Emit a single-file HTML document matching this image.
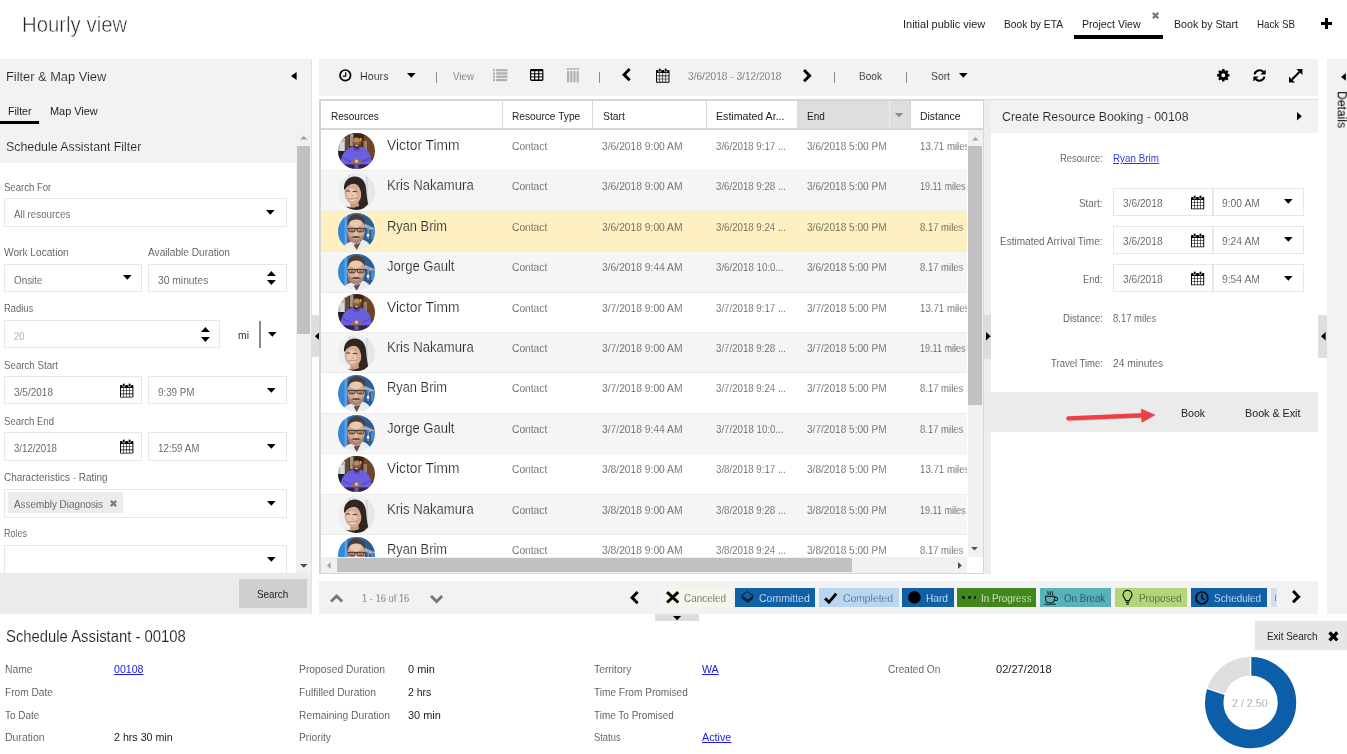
<!DOCTYPE html>
<html lang="en"><head><meta charset="utf-8"><title>Hourly view - Schedule Assistant</title>
<style>
html,body{margin:0;padding:0;background:#fff}
body{width:1347px;height:754px;position:relative;overflow:hidden;font-family:"Liberation Sans", sans-serif;-webkit-font-smoothing:antialiased}
body div,body span,body svg,body a{position:absolute;box-sizing:content-box}
.t{white-space:nowrap;display:block;transform-origin:0 0}
svg{overflow:visible;display:block}
</style></head><body>
<span id="t1" class="t" style="left:22.3px;top:14.25px;font-size:22px;line-height:22px;color:#222;transform:scaleX(0.9249);-webkit-text-stroke:0.55px #fff;">Hourly view</span>
<span id="t2" class="t" style="left:902.5px;top:18.63px;font-size:11px;line-height:11px;color:#222;transform:scaleX(0.9956);">Initial public view</span>
<span id="t3" class="t" style="left:1004px;top:18.63px;font-size:11px;line-height:11px;color:#222;transform:scaleX(0.9302);">Book by ETA</span>
<span id="t4" class="t" style="left:1082px;top:18.63px;font-size:11px;line-height:11px;color:#222;transform:scaleX(0.9624);">Project View</span>
<span id="t5" class="t" style="left:1174px;top:18.63px;font-size:11px;line-height:11px;color:#222;transform:scaleX(0.9687);">Book by Start</span>
<span id="t6" class="t" style="left:1257px;top:18.63px;font-size:11px;line-height:11px;color:#222;transform:scaleX(0.8880);">Hack SB</span>
<div style="left:1074px;top:35px;width:89px;height:3.5px;background:#000;"></div>
<svg style="left:1152px;top:12.4px;" width="7.2" height="7.2" viewBox="0 0 7.2 7.2"><path d="M0.88 0.88 L6.32 6.32 M6.32 0.88 L0.88 6.32" stroke="#777" stroke-width="2.2" stroke-linecap="butt"/></svg>
<div style="left:1320.5px;top:21.6px;width:11px;height:3px;background:#000;"></div>
<div style="left:1324.5px;top:17.6px;width:3px;height:11px;background:#000;"></div>
<div style="left:0px;top:59px;width:311.3px;height:554.5px;background:#f2f2f2;"></div>
<div style="left:311.3px;top:59px;width:0.7px;height:554.5px;background:#e2e2e2;"></div>
<span id="t7" class="t" style="left:5.5px;top:69.91px;font-size:13.5px;line-height:13.5px;color:#222;transform:scaleX(0.9495);-webkit-text-stroke:0.12px #f2f2f2;">Filter &amp; Map View</span>
<svg style="left:291.2px;top:71.8px;" width="5.6" height="8" viewBox="0 0 5.6 8"><path d="M5.6 0 V8 L0 4 Z" fill="#000"/></svg>
<span id="t8" class="t" style="left:7.5px;top:105.63px;font-size:11px;line-height:11px;color:#222;transform:scaleX(0.9620);">Filter</span>
<span id="t9" class="t" style="left:50px;top:105.63px;font-size:11px;line-height:11px;color:#222;transform:scaleX(0.9920);">Map View</span>
<div style="left:0px;top:120.8px;width:38.6px;height:3.6px;background:#000;"></div>
<div style="left:0px;top:162.5px;width:296.4px;height:410.5px;background:#fff;"></div>
<div style="left:296.4px;top:130px;width:14.9px;height:443px;background:#f1f1f1;"></div>
<span id="t10" class="t" style="left:5.5px;top:140.41px;font-size:13.5px;line-height:13.5px;color:#222;transform:scaleX(0.9149);-webkit-text-stroke:0.12px #f2f2f2;">Schedule Assistant Filter</span>
<svg style="left:299.5px;top:136.2px;" width="7.6" height="3.6" viewBox="0 0 7.6 3.6"><path d="M0 3.6 H7.6 L3.8 0 Z" fill="#a3a3a3"/></svg>
<div style="left:297.2px;top:146px;width:12.8px;height:187.7px;background:#c1c1c1;"></div>
<svg style="left:299.5px;top:563.8px;" width="7.6" height="3.8" viewBox="0 0 7.6 3.8"><path d="M0 0H7.6 L3.8 3.8 Z" fill="#505050"/></svg>
<span id="t11" class="t" style="left:4px;top:182.13px;font-size:11px;line-height:11px;color:#2a2a2a;transform:scaleX(0.8685);-webkit-text-stroke:0.22px #fff;">Search For</span>
<span id="t12" class="t" style="left:4px;top:246.63px;font-size:11px;line-height:11px;color:#2a2a2a;transform:scaleX(0.9234);-webkit-text-stroke:0.22px #fff;">Work Location</span>
<span id="t13" class="t" style="left:148px;top:246.63px;font-size:11px;line-height:11px;color:#2a2a2a;transform:scaleX(0.9203);-webkit-text-stroke:0.22px #fff;">Available Duration</span>
<span id="t14" class="t" style="left:4px;top:302.63px;font-size:11px;line-height:11px;color:#2a2a2a;transform:scaleX(0.8520);-webkit-text-stroke:0.22px #fff;">Radius</span>
<span id="t15" class="t" style="left:4px;top:359.63px;font-size:11px;line-height:11px;color:#2a2a2a;transform:scaleX(0.8829);-webkit-text-stroke:0.22px #fff;">Search Start</span>
<span id="t16" class="t" style="left:4px;top:415.63px;font-size:11px;line-height:11px;color:#2a2a2a;transform:scaleX(0.8699);-webkit-text-stroke:0.22px #fff;">Search End</span>
<span id="t17" class="t" style="left:4px;top:471.63px;font-size:11px;line-height:11px;color:#2a2a2a;transform:scaleX(0.9055);-webkit-text-stroke:0.22px #fff;">Characteristics - Rating</span>
<span id="t18" class="t" style="left:4px;top:527.63px;font-size:11px;line-height:11px;color:#2a2a2a;transform:scaleX(0.8183);-webkit-text-stroke:0.22px #fff;">Roles</span>
<div style="left:4px;top:198px;width:280.5px;height:26.5px;background:#fff;border:1px solid #e7e7e7;"></div>
<span id="t19" class="t" style="left:14px;top:209.03px;font-size:11px;line-height:11px;color:#303030;transform:scaleX(0.8887);-webkit-text-stroke:0.22px #fff;">All resources</span>
<svg style="left:266.3px;top:210.1px;" width="8.6" height="4.8" viewBox="0 0 8.6 4.8"><path d="M0 0H8.6 L4.3 4.8 Z" fill="#000"/></svg>
<div style="left:4px;top:264px;width:136.3px;height:26.3px;background:#fff;border:1px solid #e7e7e7;"></div>
<span id="t20" class="t" style="left:14px;top:274.53px;font-size:11px;line-height:11px;color:#303030;transform:scaleX(0.8964);-webkit-text-stroke:0.22px #fff;">Onsite</span>
<svg style="left:122.6px;top:275.4px;" width="8.6" height="4.8" viewBox="0 0 8.6 4.8"><path d="M0 0H8.6 L4.3 4.8 Z" fill="#000"/></svg>
<div style="left:148px;top:264px;width:136.5px;height:26.3px;background:#fff;border:1px solid #e7e7e7;"></div>
<span id="t21" class="t" style="left:157.7px;top:274.53px;font-size:11px;line-height:11px;color:#303030;transform:scaleX(0.9351);-webkit-text-stroke:0.22px #fff;">30 minutes</span>
<svg style="left:266.8px;top:271.15px;" width="8.8" height="4.9" viewBox="0 0 8.8 4.9"><path d="M0 4.9 H8.8 L4.4 0 Z" fill="#000"/></svg>
<svg style="left:266.8px;top:280.45px;" width="8.8" height="4.9" viewBox="0 0 8.8 4.9"><path d="M0 0H8.8 L4.4 4.9 Z" fill="#000"/></svg>
<div style="left:4px;top:320.2px;width:214.2px;height:26.1px;background:#fff;border:1px solid #e7e7e7;"></div>
<span id="t22" class="t" style="left:14px;top:330.53px;font-size:11px;line-height:11px;color:#777;transform:scaleX(0.8426);-webkit-text-stroke:0.3px #fff;">20</span>
<svg style="left:200.6px;top:327.35px;" width="8.8" height="4.9" viewBox="0 0 8.8 4.9"><path d="M0 4.9 H8.8 L4.4 0 Z" fill="#000"/></svg>
<svg style="left:200.6px;top:336.65px;" width="8.8" height="4.9" viewBox="0 0 8.8 4.9"><path d="M0 0H8.8 L4.4 4.9 Z" fill="#000"/></svg>
<span id="t23" class="t" style="left:238px;top:330.23px;font-size:11px;line-height:11px;color:#333;transform:scaleX(0.9477);">mi</span>
<div style="left:259.2px;top:321px;width:1.6px;height:26.6px;background:#8a8a8a;"></div>
<svg style="left:268.4px;top:332.1px;" width="8.6" height="4.8" viewBox="0 0 8.6 4.8"><path d="M0 0H8.6 L4.3 4.8 Z" fill="#000"/></svg>
<div style="left:4px;top:376.2px;width:136.3px;height:26.3px;background:#fff;border:1px solid #e7e7e7;"></div>
<span id="t24" class="t" style="left:14px;top:387.03px;font-size:11px;line-height:11px;color:#303030;transform:scaleX(0.9101);-webkit-text-stroke:0.22px #fff;">3/5/2018</span>
<svg style="left:120.4px;top:383px;" width="13.4" height="14.8" viewBox="0 0 14 15"><path fill="#000" fill-rule="evenodd" d="M1 1.800h12a1 1 0 0 1 1 1V14a1 1 0 0 1-1 1H1a1 1 0 0 1-1-1V2.800a1 1 0 0 1 1-1zM1 5h2.55v2.6h-2.55zM4.15 5h2.55v2.6h-2.55zM7.3 5h2.55v2.6h-2.55zM10.45 5h2.55v2.6h-2.55zM1 8.25h2.55v2.6h-2.55zM4.15 8.25h2.55v2.6h-2.55zM7.3 8.25h2.55v2.6h-2.55zM10.45 8.25h2.55v2.6h-2.55zM1 11.5h2.55v2.6h-2.55zM4.15 11.5h2.55v2.6h-2.55zM7.3 11.5h2.55v2.6h-2.55zM10.45 11.5h2.55v2.6h-2.55z"/><rect x="2.700" y="0" width="2.500" height="3.900" rx="1.200" fill="#000" stroke="#fff" stroke-width="0.700"/><rect x="8.800" y="0" width="2.500" height="3.900" rx="1.200" fill="#000" stroke="#fff" stroke-width="0.700"/></svg>
<div style="left:148px;top:376.2px;width:136.5px;height:26.3px;background:#fff;border:1px solid #e7e7e7;"></div>
<span id="t25" class="t" style="left:157.7px;top:387.03px;font-size:11px;line-height:11px;color:#303030;transform:scaleX(0.8907);-webkit-text-stroke:0.22px #fff;">9:39 PM</span>
<svg style="left:267px;top:388.3px;" width="8.6" height="4.8" viewBox="0 0 8.6 4.8"><path d="M0 0H8.6 L4.3 4.8 Z" fill="#000"/></svg>
<div style="left:4px;top:432.4px;width:136.3px;height:26.4px;background:#fff;border:1px solid #e7e7e7;"></div>
<span id="t26" class="t" style="left:14px;top:443.23px;font-size:11px;line-height:11px;color:#303030;transform:scaleX(0.8784);-webkit-text-stroke:0.22px #fff;">3/12/2018</span>
<svg style="left:120.4px;top:439.2px;" width="13.4" height="14.8" viewBox="0 0 14 15"><path fill="#000" fill-rule="evenodd" d="M1 1.800h12a1 1 0 0 1 1 1V14a1 1 0 0 1-1 1H1a1 1 0 0 1-1-1V2.800a1 1 0 0 1 1-1zM1 5h2.55v2.6h-2.55zM4.15 5h2.55v2.6h-2.55zM7.3 5h2.55v2.6h-2.55zM10.45 5h2.55v2.6h-2.55zM1 8.25h2.55v2.6h-2.55zM4.15 8.25h2.55v2.6h-2.55zM7.3 8.25h2.55v2.6h-2.55zM10.45 8.25h2.55v2.6h-2.55zM1 11.5h2.55v2.6h-2.55zM4.15 11.5h2.55v2.6h-2.55zM7.3 11.5h2.55v2.6h-2.55zM10.45 11.5h2.55v2.6h-2.55z"/><rect x="2.700" y="0" width="2.500" height="3.900" rx="1.200" fill="#000" stroke="#fff" stroke-width="0.700"/><rect x="8.800" y="0" width="2.500" height="3.900" rx="1.200" fill="#000" stroke="#fff" stroke-width="0.700"/></svg>
<div style="left:148px;top:432.4px;width:136.5px;height:26.4px;background:#fff;border:1px solid #e7e7e7;"></div>
<span id="t27" class="t" style="left:157.7px;top:443.23px;font-size:11px;line-height:11px;color:#303030;transform:scaleX(0.8928);-webkit-text-stroke:0.22px #fff;">12:59 AM</span>
<svg style="left:267px;top:444.4px;" width="8.6" height="4.8" viewBox="0 0 8.6 4.8"><path d="M0 0H8.6 L4.3 4.8 Z" fill="#000"/></svg>
<div style="left:4px;top:488.8px;width:280.5px;height:26.8px;background:#fff;border:1px solid #e7e7e7;"></div>
<div style="left:8px;top:492px;width:115px;height:21.4px;background:#ececec;"></div>
<span id="t28" class="t" style="left:14px;top:498.83px;font-size:11px;line-height:11px;color:#262626;transform:scaleX(0.8984);-webkit-text-stroke:0.25px #ececec;">Assembly Diagnosis</span>
<svg style="left:109.7px;top:500.1px;" width="7" height="7" viewBox="0 0 7 7"><path d="M0.88 0.88 L6.12 6.12 M6.12 0.88 L0.88 6.12" stroke="#7a7a7a" stroke-width="2.2" stroke-linecap="butt"/></svg>
<svg style="left:267px;top:500.8px;" width="8.6" height="4.8" viewBox="0 0 8.6 4.8"><path d="M0 0H8.6 L4.3 4.8 Z" fill="#000"/></svg>
<div style="left:4px;top:545px;width:280.5px;height:28px;background:#fff;border:1px solid #e7e7e7;"></div>
<svg style="left:267px;top:556.9px;" width="8.6" height="4.8" viewBox="0 0 8.6 4.8"><path d="M0 0H8.6 L4.3 4.8 Z" fill="#000"/></svg>
<div style="left:0px;top:573px;width:311.3px;height:40.5px;background:#ebebeb;"></div>
<div style="left:238.8px;top:579px;width:68px;height:29px;background:#d0cece;"></div>
<span id="t29" class="t" style="left:256.75px;top:588.93px;font-size:11px;line-height:11px;color:#222;transform:scaleX(0.8961);">Search</span>
<div style="left:312px;top:315.3px;width:7.4px;height:42.2px;background:#dedede;"></div>
<svg style="left:314.6px;top:332px;" width="4.6" height="8.4" viewBox="0 0 4.6 8.4"><path d="M4.6 0 V8.4 L0 4.2 Z" fill="#000"/></svg>
<div style="left:319.4px;top:59px;width:998.3px;height:36.8px;background:#f2f2f2;"></div>
<svg style="left:338.6px;top:69px;" width="12.6" height="12.6" viewBox="0 0 12.6 12.6"><circle cx="6.300" cy="6.300" r="5.300" fill="none" stroke="#000" stroke-width="1.700"/><path d="M6.700 3.200V7.100H3.800" fill="none" stroke="#000" stroke-width="1.200"/></svg>
<span id="t30" class="t" style="left:359.5px;top:70.83px;font-size:11px;line-height:11px;color:#222;transform:scaleX(0.9704);-webkit-text-stroke:0.12px #f2f2f2;">Hours</span>
<svg style="left:406.7px;top:73.3px;" width="8.6" height="4.8" viewBox="0 0 8.6 4.8"><path d="M0 0H8.6 L4.3 4.8 Z" fill="#000"/></svg>
<div style="left:436.1px;top:72px;width:1px;height:10.8px;background:#8c8c8c;"></div>
<div style="left:598.9px;top:72px;width:1px;height:10.8px;background:#8c8c8c;"></div>
<div style="left:833.5px;top:72px;width:1px;height:10.8px;background:#8c8c8c;"></div>
<div style="left:905.5px;top:72px;width:1px;height:10.8px;background:#8c8c8c;"></div>
<span id="t31" class="t" style="left:453px;top:70.83px;font-size:11px;line-height:11px;color:#4a4a4a;transform:scaleX(0.8875);-webkit-text-stroke:0.25px #f2f2f2;">View</span>
<svg style="left:492.6px;top:69px;" width="14.4" height="12.3" viewBox="0 0 14.4 12.3"><rect x="0" y="0" width="2" height="2.3" fill="#b0b0b0"/><rect x="3.2" y="0" width="11.2" height="2.3" fill="#b0b0b0"/><rect x="0" y="3.3" width="2" height="2.3" fill="#b0b0b0"/><rect x="3.2" y="3.3" width="11.2" height="2.3" fill="#b0b0b0"/><rect x="0" y="6.6" width="2" height="2.3" fill="#b0b0b0"/><rect x="3.2" y="6.6" width="11.2" height="2.3" fill="#b0b0b0"/><rect x="0" y="9.9" width="2" height="2.3" fill="#b0b0b0"/><rect x="3.2" y="9.9" width="11.2" height="2.3" fill="#b0b0b0"/></svg>
<svg style="left:529.6px;top:69.1px;" width="13.4" height="12" viewBox="0 0 13.4 12"><rect x="0" y="0" width="13.4" height="12" rx="1.4" fill="#000"/><rect x="1.2" y="2.2" width="2.9" height="2.1" fill="#fff"/><rect x="5.25" y="2.2" width="2.9" height="2.1" fill="#fff"/><rect x="9.3" y="2.2" width="2.9" height="2.1" fill="#fff"/><rect x="1.2" y="5.3" width="2.9" height="2.1" fill="#fff"/><rect x="5.25" y="5.3" width="2.9" height="2.1" fill="#fff"/><rect x="9.3" y="5.3" width="2.9" height="2.1" fill="#fff"/><rect x="1.2" y="8.4" width="2.9" height="2.1" fill="#fff"/><rect x="5.25" y="8.4" width="2.9" height="2.1" fill="#fff"/><rect x="9.3" y="8.4" width="2.9" height="2.1" fill="#fff"/></svg>
<svg style="left:567.2px;top:68.4px;" width="11.8" height="14.4" viewBox="0 0 11.8 14.4"><rect x="0" y="0" width="2.2" height="2" fill="#b0b0b0"/><rect x="0" y="3.1" width="2.2" height="11.3" fill="#b0b0b0"/><rect x="3.2" y="0" width="2.2" height="2" fill="#b0b0b0"/><rect x="3.2" y="3.1" width="2.2" height="11.3" fill="#b0b0b0"/><rect x="6.4" y="0" width="2.2" height="2" fill="#b0b0b0"/><rect x="6.4" y="3.1" width="2.2" height="11.3" fill="#b0b0b0"/><rect x="9.6" y="0" width="2.2" height="2" fill="#b0b0b0"/><rect x="9.6" y="3.1" width="2.2" height="11.3" fill="#b0b0b0"/></svg>
<svg style="left:622.25px;top:68.45px;" width="8.7" height="13.3" viewBox="0 0 8.7 13.3"><path d="M7.67 1.03 L2.05 6.65 L7.67 12.27" fill="none" stroke="#000" stroke-width="2.9" stroke-linejoin="miter"/></svg>
<svg style="left:655.8px;top:68.1px;" width="13.5" height="14.9" viewBox="0 0 14 15"><path fill="#000" fill-rule="evenodd" d="M1 1.800h12a1 1 0 0 1 1 1V14a1 1 0 0 1-1 1H1a1 1 0 0 1-1-1V2.800a1 1 0 0 1 1-1zM1 5h2.55v2.6h-2.55zM4.15 5h2.55v2.6h-2.55zM7.3 5h2.55v2.6h-2.55zM10.45 5h2.55v2.6h-2.55zM1 8.25h2.55v2.6h-2.55zM4.15 8.25h2.55v2.6h-2.55zM7.3 8.25h2.55v2.6h-2.55zM10.45 8.25h2.55v2.6h-2.55zM1 11.5h2.55v2.6h-2.55zM4.15 11.5h2.55v2.6h-2.55zM7.3 11.5h2.55v2.6h-2.55zM10.45 11.5h2.55v2.6h-2.55z"/><rect x="2.700" y="0" width="2.500" height="3.900" rx="1.200" fill="#000" stroke="#fff" stroke-width="0.700"/><rect x="8.800" y="0" width="2.500" height="3.900" rx="1.200" fill="#000" stroke="#fff" stroke-width="0.700"/></svg>
<span id="t32" class="t" style="left:687.8px;top:70.93px;font-size:11px;line-height:11px;color:#3a3a3a;transform:scaleX(0.9209);-webkit-text-stroke:0.28px #f2f2f2;">3/6/2018 - 3/12/2018</span>
<svg style="left:802.75px;top:68.55px;" width="8.7" height="13.3" viewBox="0 0 8.7 13.3"><path d="M1.03 1.03 L6.65 6.65 L1.03 12.27" fill="none" stroke="#000" stroke-width="2.9" stroke-linejoin="miter"/></svg>
<span id="t33" class="t" style="left:859px;top:70.83px;font-size:11px;line-height:11px;color:#222;transform:scaleX(0.9149);-webkit-text-stroke:0.12px #f2f2f2;">Book</span>
<span id="t34" class="t" style="left:931px;top:70.83px;font-size:11px;line-height:11px;color:#222;transform:scaleX(0.9407);-webkit-text-stroke:0.12px #f2f2f2;">Sort</span>
<svg style="left:959.2px;top:73.3px;" width="8.6" height="4.8" viewBox="0 0 8.6 4.8"><path d="M0 0H8.6 L4.3 4.8 Z" fill="#000"/></svg>
<svg style="left:1216.8px;top:69.2px;" width="12.6" height="12.6" viewBox="0 0 12.6 12.6"><path fill="#000" fill-rule="evenodd" d="M5.01 1.57 L5.17 0.1 L7.43 0.1 L7.59 1.57 L8.73 2.04 L9.88 1.12 L11.48 2.72 L10.56 3.87 L11.03 5.01 L12.5 5.17 L12.5 7.43 L11.03 7.59 L10.56 8.73 L11.48 9.88 L9.88 11.48 L8.73 10.56 L7.59 11.03 L7.43 12.5 L5.17 12.5 L5.01 11.03 L3.87 10.56 L2.72 11.48 L1.12 9.88 L2.04 8.73 L1.57 7.59 L0.1 7.43 L0.1 5.17 L1.57 5.01 L2.04 3.87 L1.12 2.72 L2.72 1.12 L3.87 2.04ZM4.3 6.3 a2 2 0 1 0 4 0 a2 2 0 1 0 -4 0Z"/></svg>
<svg style="left:1253px;top:69px;" width="13" height="13" viewBox="0 0 13 13"><path d="M1.6 5.4A5.1 5.1 0 0 1 10.4 3" fill="none" stroke="#000" stroke-width="2.200"/><path d="M12.6 0.4V5.6H7.4Z" fill="#000"/><path d="M11.4 7.6A5.1 5.1 0 0 1 2.6 10" fill="none" stroke="#000" stroke-width="2.200"/><path d="M0.4 12.6V7.4H5.6Z" fill="#000"/></svg>
<svg style="left:1289px;top:68.7px;" width="13.4" height="13.4" viewBox="0 0 13.4 13.4"><path d="M3 10.400L10.400 3" stroke="#000" stroke-width="2.100"/><path d="M13.400 0V6L7.400 0Z" fill="#000"/><path d="M0 13.400V7.400L6 13.400Z" fill="#000"/></svg>
<div style="left:319.4px;top:99.3px;width:665px;height:474.7px;background:#d6d6d6;"></div>
<div style="left:321.2px;top:101px;width:661.8px;height:471.7px;background:#fff;"></div>
<div style="left:797.5px;top:101.2px;width:112.5px;height:26.8px;background:#dedede;"></div>
<div style="left:502px;top:101.2px;width:1px;height:26.8px;background:#d9d9d9;"></div>
<div style="left:592px;top:101.2px;width:1px;height:26.8px;background:#d9d9d9;"></div>
<div style="left:706px;top:101.2px;width:1px;height:26.8px;background:#d9d9d9;"></div>
<div style="left:797px;top:101.2px;width:1px;height:26.8px;background:#d9d9d9;"></div>
<div style="left:909.5px;top:101.2px;width:1px;height:26.8px;background:#d9d9d9;"></div>
<div style="left:888.6px;top:101.2px;width:0.8px;height:26.8px;background:#ececec;"></div>
<div style="left:321.2px;top:128px;width:661.8px;height:2px;background:#d6d6d6;"></div>
<span id="t35" class="t" style="left:330.5px;top:110.63px;font-size:11px;line-height:11px;color:#222;transform:scaleX(0.9091);">Resources</span>
<span id="t36" class="t" style="left:511.75px;top:110.63px;font-size:11px;line-height:11px;color:#222;transform:scaleX(0.9245);">Resource Type</span>
<span id="t37" class="t" style="left:602.5px;top:110.63px;font-size:11px;line-height:11px;color:#222;transform:scaleX(0.9391);">Start</span>
<span id="t38" class="t" style="left:716px;top:110.63px;font-size:11px;line-height:11px;color:#222;transform:scaleX(0.9662);">Estimated Ar...</span>
<span id="t39" class="t" style="left:806.8px;top:110.63px;font-size:11px;line-height:11px;color:#222;transform:scaleX(0.9089);">End</span>
<span id="t40" class="t" style="left:920px;top:110.63px;font-size:11px;line-height:11px;color:#222;transform:scaleX(0.9488);">Distance</span>
<svg style="left:895.4px;top:113.1px;" width="8" height="4.2" viewBox="0 0 8 4.2"><path d="M0 0H8 L4 4.2 Z" fill="#8a8a8a"/></svg>
<div style="left:321.2px;top:130px;width:646px;height:428px;overflow:hidden">
<div style="left:0px;top:0px;width:646px;height:40.4px;background:#fff;border-top:1px solid transparent;"></div>
<svg style="left:17.2px;top:2.6px;border-radius:50%;overflow:hidden" width="36.6" height="36.6" viewBox="0 0 36.6 36.6"><filter id="bf0" x="-10%" y="-10%" width="120%" height="120%"><feGaussianBlur stdDeviation="0.45"/></filter><g filter="url(#bf0)"><rect width="37" height="37" fill="#4a2f1f"/><rect x="-1" y="5" width="8" height="15" fill="#aebcb8"/><rect x="2" y="9" width="4" height="9" fill="#d4dcd8"/><rect x="12" y="1" width="3.500" height="12" fill="#9a9a86"/><rect x="7" y="0" width="4" height="16" fill="#6a4a34"/><rect x="16" y="0" width="9" height="6" fill="#3a2418"/><rect x="21.500" y="5" width="2" height="3.500" fill="#d8b020"/><rect x="26" y="3" width="11" height="22" fill="#6e4428"/><rect x="25.500" y="8" width="3.500" height="9" fill="#a07a68"/><rect x="-1" y="18" width="8" height="12" fill="#241a2a"/><ellipse cx="18.600" cy="9.600" rx="4.200" ry="5.600" fill="#8c5a40"/><ellipse cx="18.600" cy="7.200" rx="3" ry="2.200" fill="#b88866"/><path d="M15.300 10.500c.8 3.600 5.800 3.600 6.600 0 .1 3.800-1.400 5.200-3.300 5.200s-3.400-1.400-3.300-5.200z" fill="#4a2c20"/><path d="M17.200 12.300h2.800v.9h-2.800z" fill="#e8dcd4"/><path d="M2.500 32C2.800 22 6 16.500 14.500 13.600l4.100 2.800 4.100-2.800C31 16.500 33.600 22 34 32z" fill="#6b5ee0"/><path d="M14.500 13.600l4.100 2.800-1.800 2.600zM22.700 13.600l-4.100 2.800 1.800 2.600z" fill="#5448c4"/><path d="M5 24c2 3 6 4 9 4.600M32 24c-2 3-6 4-9 4.600" stroke="#5246c0" stroke-width="1.200" fill="none"/><ellipse cx="18.500" cy="28.800" rx="5.600" ry="2.300" fill="#9a6a50"/><ellipse cx="18.500" cy="28.200" rx="1.600" ry="1.600" fill="#d8c0c8"/><rect x="-1" y="31.400" width="39" height="6" fill="#34204c"/><rect x="16.500" y="31.400" width="4" height="5" fill="#6a58a8"/></g></svg>
<span id="t41" class="t" style="left:66.3px;top:7.07px;font-size:15px;line-height:15px;color:#262626;transform:scaleX(0.9188);-webkit-text-stroke:0.2px #fff;">Victor Timm</span>
<span id="t42" class="t" style="left:190.55px;top:10.93px;font-size:11px;line-height:11px;color:#333;transform:scaleX(0.9299);-webkit-text-stroke:0.25px #fff;">Contact</span>
<span id="t43" class="t" style="left:281.3px;top:10.93px;font-size:11px;line-height:11px;color:#333;transform:scaleX(0.9334);-webkit-text-stroke:0.25px #fff;">3/6/2018 9:00 AM</span>
<span id="t44" class="t" style="left:394.8px;top:10.93px;font-size:11px;line-height:11px;color:#333;transform:scaleX(0.8801);-webkit-text-stroke:0.25px #fff;">3/6/2018 9:17 ...</span>
<span id="t45" class="t" style="left:485.6px;top:10.93px;font-size:11px;line-height:11px;color:#333;transform:scaleX(0.9166);-webkit-text-stroke:0.25px #fff;">3/6/2018 5:00 PM</span>
<span id="t46" class="t" style="left:598.8px;top:10.93px;font-size:11px;line-height:11px;color:#333;transform:scaleX(0.8796);-webkit-text-stroke:0.25px #fff;">13.71 miles</span>
<div style="left:0px;top:40.4px;width:646px;height:40.4px;background:#f5f5f5;border-top:1px solid #ececec;"></div>
<svg style="left:17.2px;top:43px;border-radius:50%;overflow:hidden" width="36.6" height="36.6" viewBox="0 0 36.6 36.6"><filter id="bf1" x="-10%" y="-10%" width="120%" height="120%"><feGaussianBlur stdDeviation="0.55"/></filter><g filter="url(#bf1)"><rect width="37" height="37" fill="#eceff0"/><rect x="10.500" y="0" width="2" height="9" fill="#d6dade"/><rect x="14.500" y="0" width="1.200" height="6" fill="#dfe3e6"/><rect x="27.600" y="3" width="2.600" height="30" fill="#d5dbe2"/><rect x="30.200" y="3" width="7" height="30" fill="#e4e8ec"/><path d="M6 16C5.500 8.500 10.500 3.400 16.800 3.500c6.800.1 10.600 4.800 11.200 11.500.5 6 1.200 11.500 2.200 16l-5.200 5-7-4 1-13z" fill="#2e2624"/><path d="M12.500 28l8 1 .8 5.500h-9.300z" fill="#c79a82"/><path d="M8.500 33.400c3 1.500 9.500 1.600 13.500-1l3.500 5H7.500z" fill="#262224"/><ellipse cx="14.900" cy="20.600" rx="8.300" ry="10.600" fill="#d8ac92" transform="rotate(-8 14.900 20.600)"/><ellipse cx="13.800" cy="21.600" rx="5.200" ry="6.600" fill="#e8c6b0" transform="rotate(-8 13.800 21.600)"/><path d="M5.800 17.500C6.500 10 12 6 17.500 7.500c3.500 1 6 4 6.800 8.500-3-3.600-5.400-5.400-8.800-5.200-3.800.2-7 2.800-9.700 6.700z" fill="#2e2624"/><path d="M22.800 12c1.700 5.500 1.700 13 .4 20.500l5.300-2c-1-6-1.600-12-2.600-16z" fill="#2e2624"/><path d="M8 18.400c1.200-.7 2.800-.7 4 0M14.800 18.800c1.300-.7 3-.6 4.300.2" stroke="#4a3630" stroke-width="1.100" fill="none"/><path d="M10.200 25.600c2.300 1.400 5.800 1.300 8.400-.5-1 3.400-6.800 4-8.400.5z" fill="#f4e8e6"/><path d="M9.900 25.400c2.600 1.100 6 .9 9-.7" stroke="#b46c6c" stroke-width=".9" fill="none"/><path d="M13.500 22.500c.6.500 1.400.5 2 0" stroke="#b88c74" stroke-width=".8" fill="none"/></g></svg>
<span id="t47" class="t" style="left:66.3px;top:47.47px;font-size:15px;line-height:15px;color:#262626;transform:scaleX(0.8747);-webkit-text-stroke:0.2px #f5f5f5;">Kris Nakamura</span>
<span id="t48" class="t" style="left:190.55px;top:51.33px;font-size:11px;line-height:11px;color:#333;transform:scaleX(0.9299);-webkit-text-stroke:0.25px #f5f5f5;">Contact</span>
<span id="t49" class="t" style="left:281.3px;top:51.33px;font-size:11px;line-height:11px;color:#333;transform:scaleX(0.9334);-webkit-text-stroke:0.25px #f5f5f5;">3/6/2018 9:00 AM</span>
<span id="t50" class="t" style="left:394.8px;top:51.33px;font-size:11px;line-height:11px;color:#333;transform:scaleX(0.8801);-webkit-text-stroke:0.25px #f5f5f5;">3/6/2018 9:28 ...</span>
<span id="t51" class="t" style="left:485.6px;top:51.33px;font-size:11px;line-height:11px;color:#333;transform:scaleX(0.9166);-webkit-text-stroke:0.25px #f5f5f5;">3/6/2018 5:00 PM</span>
<span id="t52" class="t" style="left:598.8px;top:51.33px;font-size:11px;line-height:11px;color:#333;transform:scaleX(0.8207);-webkit-text-stroke:0.25px #f5f5f5;">19.11 miles</span>
<div style="left:0px;top:80.8px;width:646px;height:40.4px;background:#fef0c1;border-top:1px solid #ececec;"></div>
<svg style="left:17.2px;top:83.4px;border-radius:50%;overflow:hidden" width="36.6" height="36.6" viewBox="0 0 36.6 36.6"><filter id="bf2" x="-10%" y="-10%" width="120%" height="120%"><feGaussianBlur stdDeviation="0.55"/></filter><g filter="url(#bf2)"><rect width="37" height="37" fill="#2f6fb8"/><rect x="-1" y="0" width="10.500" height="37" fill="#3587d8"/><rect x="6.500" y="3" width="2.500" height="30" fill="#5aa2e6"/><rect x="25" y="0" width="12" height="37" fill="#2c5c98"/><path d="M24 9.500l13 6v3.600l-13-6z" fill="#aab2ba"/><rect x="29.500" y="14" width="1.600" height="12" fill="#8095ad"/><rect x="33" y="16" width="4" height="10" fill="#4a86c8"/><ellipse cx="30" cy="22.200" rx="1.300" ry="1.700" fill="#eef0f2"/><rect x="9.500" y="25" width="3" height="5" fill="#9a4450"/><path d="M4.500 37c1-5.500 5.500-7.800 10-8.800l4 3 5.500-4.600c5 1 8.500 4.400 9.500 10.400z" fill="#e8ebf0"/><path d="M15.500 31.500l3.200 5.500 4-7.500-3.600 1.600z" fill="#6e4e3e"/><ellipse cx="18.200" cy="17" rx="8.700" ry="11.700" fill="#d6aa90"/><ellipse cx="17.600" cy="10.400" rx="6" ry="3.800" fill="#e8cab4"/><ellipse cx="17.900" cy="20.400" rx="2.200" ry="2.600" fill="#e2bca4"/><path d="M9.600 13C8.800 5.800 13 1.300 18.400 1.300S28 5.300 26.800 13c-.9-4.400-4-6.400-8.400-6.400S10.600 8.600 9.600 13z" fill="#4e3e34"/><path d="M10 20.500c1.200 2.800 4.400 4 8.100 4s7-1.200 8.200-4c0 6.200-3.700 10-8.200 10S10 26.700 10 20.500z" fill="#ab8874"/><path d="M13.800 24.200c1.300-1.700 7.300-1.700 8.600 0-1.300 1.300-7.300 1.300-8.600 0z" fill="#6e4c40"/><path d="M15 25.300c1.800.9 4.400.9 6.200 0" stroke="#e6d4cc" stroke-width=".7" fill="none"/><path d="M9.600 15.200h17.400v1H9.600z" fill="#2a2220"/><rect x="10.800" y="15.300" width="6.400" height="3.500" rx="1.300" fill="#c49c86" stroke="#2a2220" stroke-width="0.850"/><rect x="19.400" y="15.300" width="6.400" height="3.500" rx="1.300" fill="#c49c86" stroke="#2a2220" stroke-width="0.850"/><path d="M12.800 17.200h2.400M21.400 17.200h2.400" stroke="#4a3a34" stroke-width="0.800"/></g></svg>
<span id="t53" class="t" style="left:66.3px;top:87.87px;font-size:15px;line-height:15px;color:#262626;transform:scaleX(0.8565);-webkit-text-stroke:0.2px #fef0c1;">Ryan Brim</span>
<span id="t54" class="t" style="left:190.55px;top:91.73px;font-size:11px;line-height:11px;color:#333;transform:scaleX(0.9299);-webkit-text-stroke:0.25px #fef0c1;">Contact</span>
<span id="t55" class="t" style="left:281.3px;top:91.73px;font-size:11px;line-height:11px;color:#333;transform:scaleX(0.9334);-webkit-text-stroke:0.25px #fef0c1;">3/6/2018 9:00 AM</span>
<span id="t56" class="t" style="left:394.8px;top:91.73px;font-size:11px;line-height:11px;color:#333;transform:scaleX(0.8801);-webkit-text-stroke:0.25px #fef0c1;">3/6/2018 9:24 ...</span>
<span id="t57" class="t" style="left:485.6px;top:91.73px;font-size:11px;line-height:11px;color:#333;transform:scaleX(0.9166);-webkit-text-stroke:0.25px #fef0c1;">3/6/2018 5:00 PM</span>
<span id="t58" class="t" style="left:598.8px;top:91.73px;font-size:11px;line-height:11px;color:#333;transform:scaleX(0.8631);-webkit-text-stroke:0.25px #fef0c1;">8.17 miles</span>
<div style="left:0px;top:121.2px;width:646px;height:40.4px;background:#f5f5f5;border-top:1px solid #ececec;"></div>
<svg style="left:17.2px;top:123.8px;border-radius:50%;overflow:hidden" width="36.6" height="36.6" viewBox="0 0 36.6 36.6"><filter id="bf3" x="-10%" y="-10%" width="120%" height="120%"><feGaussianBlur stdDeviation="0.55"/></filter><g filter="url(#bf3)"><rect width="37" height="37" fill="#2f6fb8"/><rect x="-1" y="0" width="10.500" height="37" fill="#3587d8"/><rect x="6.500" y="3" width="2.500" height="30" fill="#5aa2e6"/><rect x="25" y="0" width="12" height="37" fill="#2c5c98"/><path d="M24 9.500l13 6v3.600l-13-6z" fill="#aab2ba"/><rect x="29.500" y="14" width="1.600" height="12" fill="#8095ad"/><rect x="33" y="16" width="4" height="10" fill="#4a86c8"/><ellipse cx="30" cy="22.200" rx="1.300" ry="1.700" fill="#eef0f2"/><rect x="9.500" y="25" width="3" height="5" fill="#9a4450"/><path d="M4.500 37c1-5.500 5.500-7.800 10-8.800l4 3 5.500-4.600c5 1 8.500 4.400 9.500 10.400z" fill="#e8ebf0"/><path d="M15.500 31.500l3.200 5.500 4-7.500-3.600 1.600z" fill="#6e4e3e"/><ellipse cx="18.200" cy="17" rx="8.700" ry="11.700" fill="#d6aa90"/><ellipse cx="17.600" cy="10.400" rx="6" ry="3.800" fill="#e8cab4"/><ellipse cx="17.900" cy="20.400" rx="2.200" ry="2.600" fill="#e2bca4"/><path d="M9.600 13C8.800 5.800 13 1.300 18.400 1.300S28 5.300 26.800 13c-.9-4.400-4-6.400-8.400-6.400S10.600 8.600 9.600 13z" fill="#4e3e34"/><path d="M10 20.500c1.200 2.800 4.400 4 8.100 4s7-1.200 8.200-4c0 6.200-3.700 10-8.200 10S10 26.700 10 20.500z" fill="#ab8874"/><path d="M13.800 24.200c1.300-1.700 7.300-1.700 8.600 0-1.300 1.300-7.300 1.300-8.600 0z" fill="#6e4c40"/><path d="M15 25.300c1.800.9 4.400.9 6.200 0" stroke="#e6d4cc" stroke-width=".7" fill="none"/><path d="M9.600 15.200h17.400v1H9.600z" fill="#2a2220"/><rect x="10.800" y="15.300" width="6.400" height="3.500" rx="1.300" fill="#c49c86" stroke="#2a2220" stroke-width="0.850"/><rect x="19.400" y="15.300" width="6.400" height="3.500" rx="1.300" fill="#c49c86" stroke="#2a2220" stroke-width="0.850"/><path d="M12.800 17.200h2.400M21.400 17.200h2.400" stroke="#4a3a34" stroke-width="0.800"/></g></svg>
<span id="t59" class="t" style="left:66.3px;top:128.27px;font-size:15px;line-height:15px;color:#262626;transform:scaleX(0.8704);-webkit-text-stroke:0.2px #f5f5f5;">Jorge Gault</span>
<span id="t60" class="t" style="left:190.55px;top:132.13px;font-size:11px;line-height:11px;color:#333;transform:scaleX(0.9299);-webkit-text-stroke:0.25px #f5f5f5;">Contact</span>
<span id="t61" class="t" style="left:281.3px;top:132.13px;font-size:11px;line-height:11px;color:#333;transform:scaleX(0.9334);-webkit-text-stroke:0.25px #f5f5f5;">3/6/2018 9:44 AM</span>
<span id="t62" class="t" style="left:394.8px;top:132.13px;font-size:11px;line-height:11px;color:#333;transform:scaleX(0.8829);-webkit-text-stroke:0.25px #f5f5f5;">3/6/2018 10:0...</span>
<span id="t63" class="t" style="left:485.6px;top:132.13px;font-size:11px;line-height:11px;color:#333;transform:scaleX(0.9166);-webkit-text-stroke:0.25px #f5f5f5;">3/6/2018 5:00 PM</span>
<span id="t64" class="t" style="left:598.8px;top:132.13px;font-size:11px;line-height:11px;color:#333;transform:scaleX(0.8631);-webkit-text-stroke:0.25px #f5f5f5;">8.17 miles</span>
<div style="left:0px;top:161.6px;width:646px;height:40.4px;background:#fff;border-top:1px solid #ececec;"></div>
<svg style="left:17.2px;top:164.2px;border-radius:50%;overflow:hidden" width="36.6" height="36.6" viewBox="0 0 36.6 36.6"><filter id="bf4" x="-10%" y="-10%" width="120%" height="120%"><feGaussianBlur stdDeviation="0.45"/></filter><g filter="url(#bf4)"><rect width="37" height="37" fill="#4a2f1f"/><rect x="-1" y="5" width="8" height="15" fill="#aebcb8"/><rect x="2" y="9" width="4" height="9" fill="#d4dcd8"/><rect x="12" y="1" width="3.500" height="12" fill="#9a9a86"/><rect x="7" y="0" width="4" height="16" fill="#6a4a34"/><rect x="16" y="0" width="9" height="6" fill="#3a2418"/><rect x="21.500" y="5" width="2" height="3.500" fill="#d8b020"/><rect x="26" y="3" width="11" height="22" fill="#6e4428"/><rect x="25.500" y="8" width="3.500" height="9" fill="#a07a68"/><rect x="-1" y="18" width="8" height="12" fill="#241a2a"/><ellipse cx="18.600" cy="9.600" rx="4.200" ry="5.600" fill="#8c5a40"/><ellipse cx="18.600" cy="7.200" rx="3" ry="2.200" fill="#b88866"/><path d="M15.300 10.500c.8 3.600 5.800 3.600 6.600 0 .1 3.800-1.400 5.200-3.300 5.200s-3.400-1.400-3.300-5.200z" fill="#4a2c20"/><path d="M17.200 12.300h2.800v.9h-2.800z" fill="#e8dcd4"/><path d="M2.500 32C2.800 22 6 16.500 14.500 13.600l4.100 2.800 4.100-2.800C31 16.500 33.600 22 34 32z" fill="#6b5ee0"/><path d="M14.500 13.600l4.100 2.800-1.800 2.600zM22.700 13.600l-4.100 2.800 1.800 2.600z" fill="#5448c4"/><path d="M5 24c2 3 6 4 9 4.600M32 24c-2 3-6 4-9 4.600" stroke="#5246c0" stroke-width="1.200" fill="none"/><ellipse cx="18.500" cy="28.800" rx="5.600" ry="2.300" fill="#9a6a50"/><ellipse cx="18.500" cy="28.200" rx="1.600" ry="1.600" fill="#d8c0c8"/><rect x="-1" y="31.400" width="39" height="6" fill="#34204c"/><rect x="16.500" y="31.400" width="4" height="5" fill="#6a58a8"/></g></svg>
<span id="t65" class="t" style="left:66.3px;top:168.67px;font-size:15px;line-height:15px;color:#262626;transform:scaleX(0.9188);-webkit-text-stroke:0.2px #fff;">Victor Timm</span>
<span id="t66" class="t" style="left:190.55px;top:172.53px;font-size:11px;line-height:11px;color:#333;transform:scaleX(0.9299);-webkit-text-stroke:0.25px #fff;">Contact</span>
<span id="t67" class="t" style="left:281.3px;top:172.53px;font-size:11px;line-height:11px;color:#333;transform:scaleX(0.9334);-webkit-text-stroke:0.25px #fff;">3/7/2018 9:00 AM</span>
<span id="t68" class="t" style="left:394.8px;top:172.53px;font-size:11px;line-height:11px;color:#333;transform:scaleX(0.8801);-webkit-text-stroke:0.25px #fff;">3/7/2018 9:17 ...</span>
<span id="t69" class="t" style="left:485.6px;top:172.53px;font-size:11px;line-height:11px;color:#333;transform:scaleX(0.9166);-webkit-text-stroke:0.25px #fff;">3/7/2018 5:00 PM</span>
<span id="t70" class="t" style="left:598.8px;top:172.53px;font-size:11px;line-height:11px;color:#333;transform:scaleX(0.8796);-webkit-text-stroke:0.25px #fff;">13.71 miles</span>
<div style="left:0px;top:202px;width:646px;height:40.4px;background:#f5f5f5;border-top:1px solid #ececec;"></div>
<svg style="left:17.2px;top:204.6px;border-radius:50%;overflow:hidden" width="36.6" height="36.6" viewBox="0 0 36.6 36.6"><filter id="bf5" x="-10%" y="-10%" width="120%" height="120%"><feGaussianBlur stdDeviation="0.55"/></filter><g filter="url(#bf5)"><rect width="37" height="37" fill="#eceff0"/><rect x="10.500" y="0" width="2" height="9" fill="#d6dade"/><rect x="14.500" y="0" width="1.200" height="6" fill="#dfe3e6"/><rect x="27.600" y="3" width="2.600" height="30" fill="#d5dbe2"/><rect x="30.200" y="3" width="7" height="30" fill="#e4e8ec"/><path d="M6 16C5.500 8.500 10.500 3.400 16.800 3.500c6.800.1 10.600 4.800 11.200 11.500.5 6 1.200 11.500 2.200 16l-5.200 5-7-4 1-13z" fill="#2e2624"/><path d="M12.500 28l8 1 .8 5.500h-9.300z" fill="#c79a82"/><path d="M8.500 33.400c3 1.500 9.500 1.600 13.500-1l3.500 5H7.500z" fill="#262224"/><ellipse cx="14.900" cy="20.600" rx="8.300" ry="10.600" fill="#d8ac92" transform="rotate(-8 14.900 20.600)"/><ellipse cx="13.800" cy="21.600" rx="5.200" ry="6.600" fill="#e8c6b0" transform="rotate(-8 13.800 21.600)"/><path d="M5.800 17.500C6.500 10 12 6 17.500 7.500c3.500 1 6 4 6.800 8.500-3-3.600-5.400-5.400-8.800-5.200-3.800.2-7 2.800-9.700 6.700z" fill="#2e2624"/><path d="M22.800 12c1.700 5.500 1.700 13 .4 20.500l5.300-2c-1-6-1.600-12-2.600-16z" fill="#2e2624"/><path d="M8 18.400c1.200-.7 2.800-.7 4 0M14.800 18.800c1.300-.7 3-.6 4.300.2" stroke="#4a3630" stroke-width="1.100" fill="none"/><path d="M10.200 25.600c2.300 1.400 5.800 1.300 8.400-.5-1 3.400-6.800 4-8.400.5z" fill="#f4e8e6"/><path d="M9.900 25.400c2.600 1.100 6 .9 9-.7" stroke="#b46c6c" stroke-width=".9" fill="none"/><path d="M13.500 22.500c.6.500 1.400.5 2 0" stroke="#b88c74" stroke-width=".8" fill="none"/></g></svg>
<span id="t71" class="t" style="left:66.3px;top:209.07px;font-size:15px;line-height:15px;color:#262626;transform:scaleX(0.8747);-webkit-text-stroke:0.2px #f5f5f5;">Kris Nakamura</span>
<span id="t72" class="t" style="left:190.55px;top:212.93px;font-size:11px;line-height:11px;color:#333;transform:scaleX(0.9299);-webkit-text-stroke:0.25px #f5f5f5;">Contact</span>
<span id="t73" class="t" style="left:281.3px;top:212.93px;font-size:11px;line-height:11px;color:#333;transform:scaleX(0.9334);-webkit-text-stroke:0.25px #f5f5f5;">3/7/2018 9:00 AM</span>
<span id="t74" class="t" style="left:394.8px;top:212.93px;font-size:11px;line-height:11px;color:#333;transform:scaleX(0.8801);-webkit-text-stroke:0.25px #f5f5f5;">3/7/2018 9:28 ...</span>
<span id="t75" class="t" style="left:485.6px;top:212.93px;font-size:11px;line-height:11px;color:#333;transform:scaleX(0.9166);-webkit-text-stroke:0.25px #f5f5f5;">3/7/2018 5:00 PM</span>
<span id="t76" class="t" style="left:598.8px;top:212.93px;font-size:11px;line-height:11px;color:#333;transform:scaleX(0.8207);-webkit-text-stroke:0.25px #f5f5f5;">19.11 miles</span>
<div style="left:0px;top:242.4px;width:646px;height:40.4px;background:#fff;border-top:1px solid #ececec;"></div>
<svg style="left:17.2px;top:245px;border-radius:50%;overflow:hidden" width="36.6" height="36.6" viewBox="0 0 36.6 36.6"><filter id="bf6" x="-10%" y="-10%" width="120%" height="120%"><feGaussianBlur stdDeviation="0.55"/></filter><g filter="url(#bf6)"><rect width="37" height="37" fill="#2f6fb8"/><rect x="-1" y="0" width="10.500" height="37" fill="#3587d8"/><rect x="6.500" y="3" width="2.500" height="30" fill="#5aa2e6"/><rect x="25" y="0" width="12" height="37" fill="#2c5c98"/><path d="M24 9.500l13 6v3.600l-13-6z" fill="#aab2ba"/><rect x="29.500" y="14" width="1.600" height="12" fill="#8095ad"/><rect x="33" y="16" width="4" height="10" fill="#4a86c8"/><ellipse cx="30" cy="22.200" rx="1.300" ry="1.700" fill="#eef0f2"/><rect x="9.500" y="25" width="3" height="5" fill="#9a4450"/><path d="M4.500 37c1-5.500 5.500-7.800 10-8.800l4 3 5.500-4.600c5 1 8.500 4.400 9.500 10.400z" fill="#e8ebf0"/><path d="M15.500 31.500l3.200 5.500 4-7.500-3.600 1.600z" fill="#6e4e3e"/><ellipse cx="18.200" cy="17" rx="8.700" ry="11.700" fill="#d6aa90"/><ellipse cx="17.600" cy="10.400" rx="6" ry="3.800" fill="#e8cab4"/><ellipse cx="17.900" cy="20.400" rx="2.200" ry="2.600" fill="#e2bca4"/><path d="M9.600 13C8.800 5.800 13 1.300 18.400 1.300S28 5.300 26.800 13c-.9-4.400-4-6.400-8.400-6.400S10.600 8.600 9.600 13z" fill="#4e3e34"/><path d="M10 20.500c1.200 2.800 4.400 4 8.100 4s7-1.200 8.200-4c0 6.200-3.700 10-8.200 10S10 26.700 10 20.500z" fill="#ab8874"/><path d="M13.800 24.200c1.300-1.700 7.300-1.700 8.600 0-1.300 1.300-7.300 1.300-8.600 0z" fill="#6e4c40"/><path d="M15 25.300c1.800.9 4.400.9 6.200 0" stroke="#e6d4cc" stroke-width=".7" fill="none"/><path d="M9.600 15.200h17.400v1H9.600z" fill="#2a2220"/><rect x="10.800" y="15.300" width="6.400" height="3.500" rx="1.300" fill="#c49c86" stroke="#2a2220" stroke-width="0.850"/><rect x="19.400" y="15.300" width="6.400" height="3.500" rx="1.300" fill="#c49c86" stroke="#2a2220" stroke-width="0.850"/><path d="M12.800 17.200h2.400M21.400 17.200h2.400" stroke="#4a3a34" stroke-width="0.800"/></g></svg>
<span id="t77" class="t" style="left:66.3px;top:249.47px;font-size:15px;line-height:15px;color:#262626;transform:scaleX(0.8565);-webkit-text-stroke:0.2px #fff;">Ryan Brim</span>
<span id="t78" class="t" style="left:190.55px;top:253.33px;font-size:11px;line-height:11px;color:#333;transform:scaleX(0.9299);-webkit-text-stroke:0.25px #fff;">Contact</span>
<span id="t79" class="t" style="left:281.3px;top:253.33px;font-size:11px;line-height:11px;color:#333;transform:scaleX(0.9334);-webkit-text-stroke:0.25px #fff;">3/7/2018 9:00 AM</span>
<span id="t80" class="t" style="left:394.8px;top:253.33px;font-size:11px;line-height:11px;color:#333;transform:scaleX(0.8801);-webkit-text-stroke:0.25px #fff;">3/7/2018 9:24 ...</span>
<span id="t81" class="t" style="left:485.6px;top:253.33px;font-size:11px;line-height:11px;color:#333;transform:scaleX(0.9166);-webkit-text-stroke:0.25px #fff;">3/7/2018 5:00 PM</span>
<span id="t82" class="t" style="left:598.8px;top:253.33px;font-size:11px;line-height:11px;color:#333;transform:scaleX(0.8631);-webkit-text-stroke:0.25px #fff;">8.17 miles</span>
<div style="left:0px;top:282.8px;width:646px;height:40.4px;background:#f5f5f5;border-top:1px solid #ececec;"></div>
<svg style="left:17.2px;top:285.4px;border-radius:50%;overflow:hidden" width="36.6" height="36.6" viewBox="0 0 36.6 36.6"><filter id="bf7" x="-10%" y="-10%" width="120%" height="120%"><feGaussianBlur stdDeviation="0.55"/></filter><g filter="url(#bf7)"><rect width="37" height="37" fill="#2f6fb8"/><rect x="-1" y="0" width="10.500" height="37" fill="#3587d8"/><rect x="6.500" y="3" width="2.500" height="30" fill="#5aa2e6"/><rect x="25" y="0" width="12" height="37" fill="#2c5c98"/><path d="M24 9.500l13 6v3.600l-13-6z" fill="#aab2ba"/><rect x="29.500" y="14" width="1.600" height="12" fill="#8095ad"/><rect x="33" y="16" width="4" height="10" fill="#4a86c8"/><ellipse cx="30" cy="22.200" rx="1.300" ry="1.700" fill="#eef0f2"/><rect x="9.500" y="25" width="3" height="5" fill="#9a4450"/><path d="M4.500 37c1-5.500 5.500-7.800 10-8.800l4 3 5.500-4.600c5 1 8.500 4.400 9.500 10.400z" fill="#e8ebf0"/><path d="M15.500 31.500l3.200 5.500 4-7.500-3.600 1.600z" fill="#6e4e3e"/><ellipse cx="18.200" cy="17" rx="8.700" ry="11.700" fill="#d6aa90"/><ellipse cx="17.600" cy="10.400" rx="6" ry="3.800" fill="#e8cab4"/><ellipse cx="17.900" cy="20.400" rx="2.200" ry="2.600" fill="#e2bca4"/><path d="M9.600 13C8.800 5.800 13 1.300 18.400 1.300S28 5.300 26.800 13c-.9-4.400-4-6.400-8.400-6.400S10.600 8.600 9.600 13z" fill="#4e3e34"/><path d="M10 20.500c1.200 2.800 4.400 4 8.100 4s7-1.200 8.200-4c0 6.200-3.700 10-8.200 10S10 26.700 10 20.500z" fill="#ab8874"/><path d="M13.800 24.200c1.300-1.700 7.300-1.700 8.600 0-1.300 1.300-7.300 1.300-8.600 0z" fill="#6e4c40"/><path d="M15 25.300c1.800.9 4.400.9 6.200 0" stroke="#e6d4cc" stroke-width=".7" fill="none"/><path d="M9.600 15.200h17.400v1H9.600z" fill="#2a2220"/><rect x="10.800" y="15.300" width="6.400" height="3.500" rx="1.300" fill="#c49c86" stroke="#2a2220" stroke-width="0.850"/><rect x="19.400" y="15.300" width="6.400" height="3.500" rx="1.300" fill="#c49c86" stroke="#2a2220" stroke-width="0.850"/><path d="M12.800 17.200h2.400M21.400 17.200h2.400" stroke="#4a3a34" stroke-width="0.800"/></g></svg>
<span id="t83" class="t" style="left:66.3px;top:289.87px;font-size:15px;line-height:15px;color:#262626;transform:scaleX(0.8704);-webkit-text-stroke:0.2px #f5f5f5;">Jorge Gault</span>
<span id="t84" class="t" style="left:190.55px;top:293.73px;font-size:11px;line-height:11px;color:#333;transform:scaleX(0.9299);-webkit-text-stroke:0.25px #f5f5f5;">Contact</span>
<span id="t85" class="t" style="left:281.3px;top:293.73px;font-size:11px;line-height:11px;color:#333;transform:scaleX(0.9334);-webkit-text-stroke:0.25px #f5f5f5;">3/7/2018 9:44 AM</span>
<span id="t86" class="t" style="left:394.8px;top:293.73px;font-size:11px;line-height:11px;color:#333;transform:scaleX(0.8829);-webkit-text-stroke:0.25px #f5f5f5;">3/7/2018 10:0...</span>
<span id="t87" class="t" style="left:485.6px;top:293.73px;font-size:11px;line-height:11px;color:#333;transform:scaleX(0.9166);-webkit-text-stroke:0.25px #f5f5f5;">3/7/2018 5:00 PM</span>
<span id="t88" class="t" style="left:598.8px;top:293.73px;font-size:11px;line-height:11px;color:#333;transform:scaleX(0.8631);-webkit-text-stroke:0.25px #f5f5f5;">8.17 miles</span>
<div style="left:0px;top:323.2px;width:646px;height:40.4px;background:#fff;border-top:1px solid #ececec;"></div>
<svg style="left:17.2px;top:325.8px;border-radius:50%;overflow:hidden" width="36.6" height="36.6" viewBox="0 0 36.6 36.6"><filter id="bf8" x="-10%" y="-10%" width="120%" height="120%"><feGaussianBlur stdDeviation="0.45"/></filter><g filter="url(#bf8)"><rect width="37" height="37" fill="#4a2f1f"/><rect x="-1" y="5" width="8" height="15" fill="#aebcb8"/><rect x="2" y="9" width="4" height="9" fill="#d4dcd8"/><rect x="12" y="1" width="3.500" height="12" fill="#9a9a86"/><rect x="7" y="0" width="4" height="16" fill="#6a4a34"/><rect x="16" y="0" width="9" height="6" fill="#3a2418"/><rect x="21.500" y="5" width="2" height="3.500" fill="#d8b020"/><rect x="26" y="3" width="11" height="22" fill="#6e4428"/><rect x="25.500" y="8" width="3.500" height="9" fill="#a07a68"/><rect x="-1" y="18" width="8" height="12" fill="#241a2a"/><ellipse cx="18.600" cy="9.600" rx="4.200" ry="5.600" fill="#8c5a40"/><ellipse cx="18.600" cy="7.200" rx="3" ry="2.200" fill="#b88866"/><path d="M15.300 10.500c.8 3.600 5.800 3.600 6.600 0 .1 3.800-1.400 5.200-3.300 5.200s-3.400-1.400-3.300-5.200z" fill="#4a2c20"/><path d="M17.200 12.300h2.800v.9h-2.800z" fill="#e8dcd4"/><path d="M2.500 32C2.800 22 6 16.500 14.500 13.600l4.100 2.800 4.100-2.800C31 16.500 33.600 22 34 32z" fill="#6b5ee0"/><path d="M14.500 13.600l4.100 2.800-1.800 2.600zM22.700 13.600l-4.100 2.800 1.800 2.600z" fill="#5448c4"/><path d="M5 24c2 3 6 4 9 4.600M32 24c-2 3-6 4-9 4.600" stroke="#5246c0" stroke-width="1.200" fill="none"/><ellipse cx="18.500" cy="28.800" rx="5.600" ry="2.300" fill="#9a6a50"/><ellipse cx="18.500" cy="28.200" rx="1.600" ry="1.600" fill="#d8c0c8"/><rect x="-1" y="31.400" width="39" height="6" fill="#34204c"/><rect x="16.500" y="31.400" width="4" height="5" fill="#6a58a8"/></g></svg>
<span id="t89" class="t" style="left:66.3px;top:330.27px;font-size:15px;line-height:15px;color:#262626;transform:scaleX(0.9188);-webkit-text-stroke:0.2px #fff;">Victor Timm</span>
<span id="t90" class="t" style="left:190.55px;top:334.13px;font-size:11px;line-height:11px;color:#333;transform:scaleX(0.9299);-webkit-text-stroke:0.25px #fff;">Contact</span>
<span id="t91" class="t" style="left:281.3px;top:334.13px;font-size:11px;line-height:11px;color:#333;transform:scaleX(0.9334);-webkit-text-stroke:0.25px #fff;">3/8/2018 9:00 AM</span>
<span id="t92" class="t" style="left:394.8px;top:334.13px;font-size:11px;line-height:11px;color:#333;transform:scaleX(0.8801);-webkit-text-stroke:0.25px #fff;">3/8/2018 9:17 ...</span>
<span id="t93" class="t" style="left:485.6px;top:334.13px;font-size:11px;line-height:11px;color:#333;transform:scaleX(0.9166);-webkit-text-stroke:0.25px #fff;">3/8/2018 5:00 PM</span>
<span id="t94" class="t" style="left:598.8px;top:334.13px;font-size:11px;line-height:11px;color:#333;transform:scaleX(0.8796);-webkit-text-stroke:0.25px #fff;">13.71 miles</span>
<div style="left:0px;top:363.6px;width:646px;height:40.4px;background:#f5f5f5;border-top:1px solid #ececec;"></div>
<svg style="left:17.2px;top:366.2px;border-radius:50%;overflow:hidden" width="36.6" height="36.6" viewBox="0 0 36.6 36.6"><filter id="bf9" x="-10%" y="-10%" width="120%" height="120%"><feGaussianBlur stdDeviation="0.55"/></filter><g filter="url(#bf9)"><rect width="37" height="37" fill="#eceff0"/><rect x="10.500" y="0" width="2" height="9" fill="#d6dade"/><rect x="14.500" y="0" width="1.200" height="6" fill="#dfe3e6"/><rect x="27.600" y="3" width="2.600" height="30" fill="#d5dbe2"/><rect x="30.200" y="3" width="7" height="30" fill="#e4e8ec"/><path d="M6 16C5.500 8.500 10.500 3.400 16.800 3.500c6.800.1 10.600 4.800 11.200 11.500.5 6 1.200 11.500 2.200 16l-5.200 5-7-4 1-13z" fill="#2e2624"/><path d="M12.500 28l8 1 .8 5.500h-9.300z" fill="#c79a82"/><path d="M8.500 33.400c3 1.500 9.500 1.600 13.500-1l3.500 5H7.500z" fill="#262224"/><ellipse cx="14.900" cy="20.600" rx="8.300" ry="10.600" fill="#d8ac92" transform="rotate(-8 14.900 20.600)"/><ellipse cx="13.800" cy="21.600" rx="5.200" ry="6.600" fill="#e8c6b0" transform="rotate(-8 13.800 21.600)"/><path d="M5.800 17.500C6.500 10 12 6 17.500 7.500c3.500 1 6 4 6.800 8.500-3-3.600-5.400-5.400-8.800-5.200-3.800.2-7 2.800-9.700 6.700z" fill="#2e2624"/><path d="M22.800 12c1.700 5.500 1.700 13 .4 20.500l5.300-2c-1-6-1.600-12-2.600-16z" fill="#2e2624"/><path d="M8 18.400c1.200-.7 2.800-.7 4 0M14.800 18.800c1.300-.7 3-.6 4.300.2" stroke="#4a3630" stroke-width="1.100" fill="none"/><path d="M10.200 25.600c2.300 1.400 5.800 1.300 8.400-.5-1 3.400-6.800 4-8.400.5z" fill="#f4e8e6"/><path d="M9.900 25.400c2.600 1.100 6 .9 9-.7" stroke="#b46c6c" stroke-width=".9" fill="none"/><path d="M13.500 22.500c.6.500 1.400.5 2 0" stroke="#b88c74" stroke-width=".8" fill="none"/></g></svg>
<span id="t95" class="t" style="left:66.3px;top:370.67px;font-size:15px;line-height:15px;color:#262626;transform:scaleX(0.8747);-webkit-text-stroke:0.2px #f5f5f5;">Kris Nakamura</span>
<span id="t96" class="t" style="left:190.55px;top:374.53px;font-size:11px;line-height:11px;color:#333;transform:scaleX(0.9299);-webkit-text-stroke:0.25px #f5f5f5;">Contact</span>
<span id="t97" class="t" style="left:281.3px;top:374.53px;font-size:11px;line-height:11px;color:#333;transform:scaleX(0.9334);-webkit-text-stroke:0.25px #f5f5f5;">3/8/2018 9:00 AM</span>
<span id="t98" class="t" style="left:394.8px;top:374.53px;font-size:11px;line-height:11px;color:#333;transform:scaleX(0.8801);-webkit-text-stroke:0.25px #f5f5f5;">3/8/2018 9:28 ...</span>
<span id="t99" class="t" style="left:485.6px;top:374.53px;font-size:11px;line-height:11px;color:#333;transform:scaleX(0.9166);-webkit-text-stroke:0.25px #f5f5f5;">3/8/2018 5:00 PM</span>
<span id="t100" class="t" style="left:598.8px;top:374.53px;font-size:11px;line-height:11px;color:#333;transform:scaleX(0.8207);-webkit-text-stroke:0.25px #f5f5f5;">19.11 miles</span>
<div style="left:0px;top:404px;width:646px;height:40.4px;background:#fff;border-top:1px solid #ececec;"></div>
<svg style="left:17.2px;top:406.6px;border-radius:50%;overflow:hidden" width="36.6" height="36.6" viewBox="0 0 36.6 36.6"><filter id="bf10" x="-10%" y="-10%" width="120%" height="120%"><feGaussianBlur stdDeviation="0.55"/></filter><g filter="url(#bf10)"><rect width="37" height="37" fill="#2f6fb8"/><rect x="-1" y="0" width="10.500" height="37" fill="#3587d8"/><rect x="6.500" y="3" width="2.500" height="30" fill="#5aa2e6"/><rect x="25" y="0" width="12" height="37" fill="#2c5c98"/><path d="M24 9.500l13 6v3.600l-13-6z" fill="#aab2ba"/><rect x="29.500" y="14" width="1.600" height="12" fill="#8095ad"/><rect x="33" y="16" width="4" height="10" fill="#4a86c8"/><ellipse cx="30" cy="22.200" rx="1.300" ry="1.700" fill="#eef0f2"/><rect x="9.500" y="25" width="3" height="5" fill="#9a4450"/><path d="M4.500 37c1-5.500 5.500-7.800 10-8.800l4 3 5.500-4.600c5 1 8.500 4.400 9.500 10.400z" fill="#e8ebf0"/><path d="M15.500 31.500l3.200 5.500 4-7.500-3.600 1.600z" fill="#6e4e3e"/><ellipse cx="18.200" cy="17" rx="8.700" ry="11.700" fill="#d6aa90"/><ellipse cx="17.600" cy="10.400" rx="6" ry="3.800" fill="#e8cab4"/><ellipse cx="17.900" cy="20.400" rx="2.200" ry="2.600" fill="#e2bca4"/><path d="M9.600 13C8.800 5.800 13 1.300 18.400 1.300S28 5.300 26.800 13c-.9-4.400-4-6.400-8.400-6.400S10.600 8.600 9.600 13z" fill="#4e3e34"/><path d="M10 20.500c1.200 2.800 4.400 4 8.100 4s7-1.200 8.200-4c0 6.200-3.700 10-8.200 10S10 26.700 10 20.500z" fill="#ab8874"/><path d="M13.800 24.200c1.300-1.700 7.300-1.700 8.600 0-1.300 1.300-7.300 1.300-8.600 0z" fill="#6e4c40"/><path d="M15 25.300c1.800.9 4.400.9 6.200 0" stroke="#e6d4cc" stroke-width=".7" fill="none"/><path d="M9.600 15.200h17.400v1H9.600z" fill="#2a2220"/><rect x="10.800" y="15.300" width="6.400" height="3.500" rx="1.300" fill="#c49c86" stroke="#2a2220" stroke-width="0.850"/><rect x="19.400" y="15.300" width="6.400" height="3.500" rx="1.300" fill="#c49c86" stroke="#2a2220" stroke-width="0.850"/><path d="M12.800 17.200h2.400M21.400 17.200h2.400" stroke="#4a3a34" stroke-width="0.800"/></g></svg>
<span id="t101" class="t" style="left:66.3px;top:411.07px;font-size:15px;line-height:15px;color:#262626;transform:scaleX(0.8565);-webkit-text-stroke:0.2px #fff;">Ryan Brim</span>
<span id="t102" class="t" style="left:190.55px;top:414.93px;font-size:11px;line-height:11px;color:#333;transform:scaleX(0.9299);-webkit-text-stroke:0.25px #fff;">Contact</span>
<span id="t103" class="t" style="left:281.3px;top:414.93px;font-size:11px;line-height:11px;color:#333;transform:scaleX(0.9334);-webkit-text-stroke:0.25px #fff;">3/8/2018 9:00 AM</span>
<span id="t104" class="t" style="left:394.8px;top:414.93px;font-size:11px;line-height:11px;color:#333;transform:scaleX(0.8801);-webkit-text-stroke:0.25px #fff;">3/8/2018 9:24 ...</span>
<span id="t105" class="t" style="left:485.6px;top:414.93px;font-size:11px;line-height:11px;color:#333;transform:scaleX(0.9166);-webkit-text-stroke:0.25px #fff;">3/8/2018 5:00 PM</span>
<span id="t106" class="t" style="left:598.8px;top:414.93px;font-size:11px;line-height:11px;color:#333;transform:scaleX(0.8631);-webkit-text-stroke:0.25px #fff;">8.17 miles</span>
</div>
<div style="left:967.5px;top:130px;width:15.5px;height:427.4px;background:#f1f1f1;"></div>
<svg style="left:971.7px;top:136.9px;" width="6.6" height="3.4" viewBox="0 0 6.6 3.4"><path d="M0 3.4 H6.6 L3.3 0 Z" fill="#a3a3a3"/></svg>
<div style="left:968.4px;top:146px;width:13.6px;height:259.2px;background:#c1c1c1;"></div>
<svg style="left:971.35px;top:547.45px;" width="6.9" height="3.5" viewBox="0 0 6.9 3.5"><path d="M0 0H6.9 L3.45 3.5 Z" fill="#505050"/></svg>
<div style="left:321.2px;top:557.4px;width:646.3px;height:15.3px;background:#f1f1f1;"></div>
<svg style="left:327.2px;top:561.6px;" width="3.6" height="7" viewBox="0 0 3.6 7"><path d="M3.6 0 V7 L0 3.5 Z" fill="#a3a3a3"/></svg>
<div style="left:337px;top:558.4px;width:514.5px;height:13.4px;background:#c1c1c1;"></div>
<svg style="left:957.9px;top:561.6px;" width="3.8" height="7" viewBox="0 0 3.8 7"><path d="M0 0 V7 L3.8 3.5 Z" fill="#505050"/></svg>
<div style="left:984.4px;top:100.3px;width:6.6px;height:473.7px;background:#ededed;"></div>
<div style="left:984.4px;top:314.6px;width:6.6px;height:44px;background:#dcdcdc;"></div>
<svg style="left:986px;top:332.1px;" width="4.6" height="8.4" viewBox="0 0 4.6 8.4"><path d="M0 0 V8.4 L4.6 4.2 Z" fill="#000"/></svg>
<div style="left:984.4px;top:99.3px;width:333.3px;height:1px;background:#dcdcdc;"></div>
<div style="left:991px;top:100.3px;width:326.7px;height:32.4px;background:#f2f2f2;"></div>
<span id="t107" class="t" style="left:1002px;top:110.25px;font-size:13.4px;line-height:13.4px;color:#222;transform:scaleX(0.9212);-webkit-text-stroke:0.12px #f2f2f2;">Create Resource Booking - 00108</span>
<svg style="left:1296.9px;top:112.3px;" width="4.8" height="8.4" viewBox="0 0 4.8 8.4"><path d="M0 0 V8.4 L4.8 4.2 Z" fill="#000"/></svg>
<span id="t108" class="t" style="left:1059.8px;top:152.93px;font-size:11px;line-height:11px;color:#2a2a2a;transform:scaleX(0.8572);-webkit-text-stroke:0.22px #fff;">Resource:</span>
<span id="t109" class="t" style="left:1079.3px;top:197.63px;font-size:11px;line-height:11px;color:#2a2a2a;transform:scaleX(0.8935);-webkit-text-stroke:0.22px #fff;">Start:</span>
<span id="t110" class="t" style="left:1000.3px;top:235.93px;font-size:11px;line-height:11px;color:#2a2a2a;transform:scaleX(0.9113);-webkit-text-stroke:0.22px #fff;">Estimated Arrival Time:</span>
<span id="t111" class="t" style="left:1083.3px;top:274.23px;font-size:11px;line-height:11px;color:#2a2a2a;transform:scaleX(0.8622);-webkit-text-stroke:0.22px #fff;">End:</span>
<span id="t112" class="t" style="left:1062.8px;top:312.83px;font-size:11px;line-height:11px;color:#2a2a2a;transform:scaleX(0.8719);-webkit-text-stroke:0.22px #fff;">Distance:</span>
<span id="t113" class="t" style="left:1050.8px;top:358.23px;font-size:11px;line-height:11px;color:#2a2a2a;transform:scaleX(0.8649);-webkit-text-stroke:0.22px #fff;">Travel Time:</span>
<span id="t114" class="t" style="left:1113px;top:152.93px;font-size:11px;line-height:11px;color:#3434ee;transform:scaleX(0.8935);text-decoration:underline;">Ryan Brim</span>
<div style="left:1113px;top:187.5px;width:98px;height:26.2px;background:#fff;border:1px solid #e7e7e7;"></div>
<div style="left:1213px;top:187.5px;width:88.6px;height:26.2px;background:#fff;border:1px solid #e7e7e7;"></div>
<span id="t115" class="t" style="left:1123px;top:197.53px;font-size:11px;line-height:11px;color:#303030;transform:scaleX(0.9241);-webkit-text-stroke:0.22px #fff;">3/6/2018</span>
<svg style="left:1191.2px;top:194.5px;" width="13.2" height="14.6" viewBox="0 0 14 15"><path fill="#000" fill-rule="evenodd" d="M1 1.800h12a1 1 0 0 1 1 1V14a1 1 0 0 1-1 1H1a1 1 0 0 1-1-1V2.800a1 1 0 0 1 1-1zM1 5h2.55v2.6h-2.55zM4.15 5h2.55v2.6h-2.55zM7.3 5h2.55v2.6h-2.55zM10.45 5h2.55v2.6h-2.55zM1 8.25h2.55v2.6h-2.55zM4.15 8.25h2.55v2.6h-2.55zM7.3 8.25h2.55v2.6h-2.55zM10.45 8.25h2.55v2.6h-2.55zM1 11.5h2.55v2.6h-2.55zM4.15 11.5h2.55v2.6h-2.55zM7.3 11.5h2.55v2.6h-2.55zM10.45 11.5h2.55v2.6h-2.55z"/><rect x="2.700" y="0" width="2.500" height="3.900" rx="1.200" fill="#000" stroke="#fff" stroke-width="0.700"/><rect x="8.800" y="0" width="2.500" height="3.900" rx="1.200" fill="#000" stroke="#fff" stroke-width="0.700"/></svg>
<span id="t116" class="t" style="left:1222.4px;top:197.53px;font-size:11px;line-height:11px;color:#303030;transform:scaleX(0.9388);-webkit-text-stroke:0.22px #fff;">9:00 AM</span>
<svg style="left:1283.9px;top:198.9px;" width="8.6" height="4.8" viewBox="0 0 8.6 4.8"><path d="M0 0H8.6 L4.3 4.8 Z" fill="#000"/></svg>
<div style="left:1113px;top:225.9px;width:98px;height:26.2px;background:#fff;border:1px solid #e7e7e7;"></div>
<div style="left:1213px;top:225.9px;width:88.6px;height:26.2px;background:#fff;border:1px solid #e7e7e7;"></div>
<span id="t117" class="t" style="left:1123px;top:235.93px;font-size:11px;line-height:11px;color:#303030;transform:scaleX(0.9241);-webkit-text-stroke:0.22px #fff;">3/6/2018</span>
<svg style="left:1191.2px;top:232.9px;" width="13.2" height="14.6" viewBox="0 0 14 15"><path fill="#000" fill-rule="evenodd" d="M1 1.800h12a1 1 0 0 1 1 1V14a1 1 0 0 1-1 1H1a1 1 0 0 1-1-1V2.800a1 1 0 0 1 1-1zM1 5h2.55v2.6h-2.55zM4.15 5h2.55v2.6h-2.55zM7.3 5h2.55v2.6h-2.55zM10.45 5h2.55v2.6h-2.55zM1 8.25h2.55v2.6h-2.55zM4.15 8.25h2.55v2.6h-2.55zM7.3 8.25h2.55v2.6h-2.55zM10.45 8.25h2.55v2.6h-2.55zM1 11.5h2.55v2.6h-2.55zM4.15 11.5h2.55v2.6h-2.55zM7.3 11.5h2.55v2.6h-2.55zM10.45 11.5h2.55v2.6h-2.55z"/><rect x="2.700" y="0" width="2.500" height="3.900" rx="1.200" fill="#000" stroke="#fff" stroke-width="0.700"/><rect x="8.800" y="0" width="2.500" height="3.900" rx="1.200" fill="#000" stroke="#fff" stroke-width="0.700"/></svg>
<span id="t118" class="t" style="left:1222.4px;top:235.93px;font-size:11px;line-height:11px;color:#303030;transform:scaleX(0.9388);-webkit-text-stroke:0.22px #fff;">9:24 AM</span>
<svg style="left:1283.9px;top:237.3px;" width="8.6" height="4.8" viewBox="0 0 8.6 4.8"><path d="M0 0H8.6 L4.3 4.8 Z" fill="#000"/></svg>
<div style="left:1113px;top:264.3px;width:98px;height:26.2px;background:#fff;border:1px solid #e7e7e7;"></div>
<div style="left:1213px;top:264.3px;width:88.6px;height:26.2px;background:#fff;border:1px solid #e7e7e7;"></div>
<span id="t119" class="t" style="left:1123px;top:274.33px;font-size:11px;line-height:11px;color:#303030;transform:scaleX(0.9241);-webkit-text-stroke:0.22px #fff;">3/6/2018</span>
<svg style="left:1191.2px;top:271.3px;" width="13.2" height="14.6" viewBox="0 0 14 15"><path fill="#000" fill-rule="evenodd" d="M1 1.800h12a1 1 0 0 1 1 1V14a1 1 0 0 1-1 1H1a1 1 0 0 1-1-1V2.800a1 1 0 0 1 1-1zM1 5h2.55v2.6h-2.55zM4.15 5h2.55v2.6h-2.55zM7.3 5h2.55v2.6h-2.55zM10.45 5h2.55v2.6h-2.55zM1 8.25h2.55v2.6h-2.55zM4.15 8.25h2.55v2.6h-2.55zM7.3 8.25h2.55v2.6h-2.55zM10.45 8.25h2.55v2.6h-2.55zM1 11.5h2.55v2.6h-2.55zM4.15 11.5h2.55v2.6h-2.55zM7.3 11.5h2.55v2.6h-2.55zM10.45 11.5h2.55v2.6h-2.55z"/><rect x="2.700" y="0" width="2.500" height="3.900" rx="1.200" fill="#000" stroke="#fff" stroke-width="0.700"/><rect x="8.800" y="0" width="2.500" height="3.900" rx="1.200" fill="#000" stroke="#fff" stroke-width="0.700"/></svg>
<span id="t120" class="t" style="left:1222.4px;top:274.33px;font-size:11px;line-height:11px;color:#303030;transform:scaleX(0.9388);-webkit-text-stroke:0.22px #fff;">9:54 AM</span>
<svg style="left:1283.9px;top:275.7px;" width="8.6" height="4.8" viewBox="0 0 8.6 4.8"><path d="M0 0H8.6 L4.3 4.8 Z" fill="#000"/></svg>
<span id="t121" class="t" style="left:1113px;top:312.83px;font-size:11px;line-height:11px;color:#303030;transform:scaleX(0.8631);-webkit-text-stroke:0.22px #fff;">8.17 miles</span>
<span id="t122" class="t" style="left:1113px;top:358.23px;font-size:11px;line-height:11px;color:#303030;transform:scaleX(0.9332);-webkit-text-stroke:0.22px #fff;">24 minutes</span>
<div style="left:991px;top:391.8px;width:326.7px;height:39.8px;background:#ebebeb;"></div>
<span id="t123" class="t" style="left:1180.7px;top:407.63px;font-size:11px;line-height:11px;color:#222;transform:scaleX(0.9586);">Book</span>
<span id="t124" class="t" style="left:1244.5px;top:407.63px;font-size:11px;line-height:11px;color:#222;transform:scaleX(0.9759);">Book &amp; Exit</span>
<svg style="left:1064px;top:405px;" width="94" height="22" viewBox="0 0 94 22"><path d="M5.400 14.400 L80 10.800" stroke="#b9b0b0" stroke-width="4.400" stroke-linecap="round" opacity="0.550"/><path d="M4.400 13.400 L79 10.200" stroke="#ee3f45" stroke-width="4.400" stroke-linecap="round"/><path d="M77.400 4.200 L90.800 10 L78 17.200 Z" fill="#ee3f45" stroke="#ee3f45" stroke-width="0.800" stroke-linejoin="round"/></svg>
<div style="left:1317.7px;top:315px;width:9.1px;height:43px;background:#dedede;"></div>
<svg style="left:1321.1px;top:332.1px;" width="4.6" height="8.4" viewBox="0 0 4.6 8.4"><path d="M4.6 0 V8.4 L0 4.2 Z" fill="#000"/></svg>
<div style="left:1326.8px;top:59px;width:20.2px;height:554.5px;background:#f2f2f2;"></div>
<svg style="left:1340.75px;top:73.1px;" width="4.9" height="7.8" viewBox="0 0 4.9 7.8"><path d="M4.9 0 V7.8 L0 3.9 Z" fill="#000"/></svg>
<span id="tdet" class="t" style="left:1337.200px;top:90.600px;font-size:13px;line-height:13px;color:#000;transform-origin:0 0;transform:rotate(90deg) translate(0,-11.700px) scaleX(0.935);will-change:transform">Details</span>
<div style="left:319.4px;top:581px;width:998.3px;height:32.6px;background:#f2f2f2;"></div>
<svg style="left:330.1px;top:593.7px;" width="13.2" height="8.6" viewBox="0 0 13.2 8.6"><path d="M1.03 7.57 L6.6 2.05 L12.17 7.57" fill="none" stroke="#777" stroke-width="2.9" stroke-linejoin="miter"/></svg>
<span id="t126" class="t" style="left:361.5px;top:592.63px;font-size:11px;line-height:11px;color:#444;transform:scaleX(0.8497);-webkit-text-stroke:0.3px #f2f2f2;">1 - 16 of 16</span>
<svg style="left:430px;top:594.5px;" width="13.2" height="8.6" viewBox="0 0 13.2 8.6"><path d="M1.03 1.03 L6.6 6.55 L12.17 1.03" fill="none" stroke="#777" stroke-width="2.9" stroke-linejoin="miter"/></svg>
<svg style="left:630.15px;top:590.55px;" width="8.7" height="13.3" viewBox="0 0 8.7 13.3"><path d="M7.67 1.03 L2.05 6.65 L7.67 12.27" fill="none" stroke="#000" stroke-width="2.9" stroke-linejoin="miter"/></svg>
<div style="left:660.6px;top:588.4px;width:71.4px;height:18.2px;background:#f3f8ea;"></div>
<svg style="left:665.7px;top:591.2px;" width="13.3" height="12.6" viewBox="0 0 13.3 12.6"><path d="M1.100 1.100L12.200 11.500M12.200 1.100L1.100 11.500" stroke="#000" stroke-width="3"/></svg>
<span id="t127" class="t" style="left:684px;top:592.63px;font-size:11px;line-height:11px;color:#3c3c3c;transform:scaleX(0.9036);-webkit-text-stroke:0.25px #f3f8ea;">Canceled</span>
<div style="left:735px;top:588.4px;width:80px;height:18.2px;background:#0f5fa9;"></div>
<svg style="left:741px;top:591px;" width="12.8" height="12" viewBox="0 0 12.8 12"><g fill="none" stroke="#0b0b0b" stroke-width="0.900" stroke-linejoin="round"><path d="M6.200 0.500 L12.300 4.800 L6.800 9 L0.600 4.600Z"/><path d="M0.600 5.800 L6.800 10.200 L12.300 6"/><path d="M0.600 7 L6.800 11.400 L12.300 7.200"/></g></svg>
<span id="t128" class="t" style="left:759px;top:592.63px;font-size:11px;line-height:11px;color:#fff;transform:scaleX(0.9550);-webkit-text-stroke:0.25px #0f5fa9;">Committed</span>
<div style="left:819px;top:588.4px;width:79.8px;height:18.2px;background:#b8d6f2;"></div>
<svg style="left:824.2px;top:591.6px;" width="13.4" height="12" viewBox="0 0 13.4 12"><path d="M1.100 6.400 L5 10.200 L12.200 1.600" fill="none" stroke="#000" stroke-width="2.900"/></svg>
<span id="t129" class="t" style="left:843px;top:592.63px;font-size:11px;line-height:11px;color:#3c4a58;transform:scaleX(0.9400);-webkit-text-stroke:0.3px #b8d6f2;">Completed</span>
<div style="left:902px;top:588.4px;width:52px;height:18.2px;background:#0f5fa9;"></div>
<svg style="left:908px;top:591px;" width="12.8" height="12.8" viewBox="0 0 12.8 12.8"><circle cx="6.400" cy="6.400" r="6.300" fill="#000"/></svg>
<span id="t130" class="t" style="left:926px;top:592.63px;font-size:11px;line-height:11px;color:#fff;transform:scaleX(0.9216);-webkit-text-stroke:0.25px #0f5fa9;">Hard</span>
<div style="left:957px;top:588.4px;width:79px;height:18.2px;background:#42871c;"></div>
<div style="left:962.2px;top:596.4px;width:2.9px;height:2.9px;background:#0a1a04;border-radius:50%;"></div>
<div style="left:967.9px;top:596.4px;width:2.9px;height:2.9px;background:#0a1a04;border-radius:50%;"></div>
<div style="left:973.6px;top:596.4px;width:2.9px;height:2.9px;background:#0a1a04;border-radius:50%;"></div>
<span id="t131" class="t" style="left:980.5px;top:592.63px;font-size:11px;line-height:11px;color:#fff;transform:scaleX(0.8975);-webkit-text-stroke:0.25px #42871c;">In Progress</span>
<div style="left:1040.3px;top:588.4px;width:70.5px;height:18.2px;background:#59b1b9;"></div>
<svg style="left:1044.4px;top:590px;" width="14.6" height="15" viewBox="0 0 14.6 15"><g fill="none" stroke="#10282c" stroke-width="1.100"><path d="M1.600 6.400H10.400V9.600A3.200 3.200 0 0 1 7.200 12.800H4.800A3.200 3.200 0 0 1 1.600 9.600Z"/><path d="M10.400 7.400H12.200A1.400 1.400 0 0 1 12.200 10.400H10.400"/><path d="M0.400 14.200H11.800"/><path d="M4 1.200C3.200 2.600 4.800 3.600 4 5M6.200 1.200C5.400 2.600 7 3.600 6.200 5M8.400 1.200C7.600 2.600 9.200 3.600 8.400 5"/></g></svg>
<span id="t132" class="t" style="left:1063.7px;top:592.63px;font-size:11px;line-height:11px;color:#143a40;transform:scaleX(0.8876);-webkit-text-stroke:0.25px #59b1b9;">On Break</span>
<div style="left:1115px;top:588.4px;width:72px;height:18.2px;background:#b4d67b;"></div>
<svg style="left:1121.6px;top:589.8px;" width="11" height="15.4" viewBox="0 0 11 15.4"><g fill="none" stroke="#10200a" stroke-width="1.200"><path d="M3.600 10.600C3.600 8.600 1 7.600 1 4.800A4.500 4.500 0 0 1 10 4.800C10 7.600 7.400 8.600 7.400 10.600Z"/><path d="M3.800 12.400H7.200M4.200 14.200H6.800"/></g></svg>
<span id="t133" class="t" style="left:1138.5px;top:592.63px;font-size:11px;line-height:11px;color:#34481e;transform:scaleX(0.9027);-webkit-text-stroke:0.25px #b4d67b;">Proposed</span>
<div style="left:1191px;top:588.4px;width:75.6px;height:18.2px;background:#0f5fa9;"></div>
<svg style="left:1195.2px;top:590.6px;" width="13.8" height="13.8" viewBox="0 0 13.8 13.8"><circle cx="6.900" cy="6.900" r="5.900" fill="none" stroke="#0a0a0a" stroke-width="1.700"/><path d="M6.900 3.200V7.200L9.600 8.800" fill="none" stroke="#0a0a0a" stroke-width="1.400"/></svg>
<span id="t134" class="t" style="left:1214px;top:592.63px;font-size:11px;line-height:11px;color:#fff;transform:scaleX(0.9041);-webkit-text-stroke:0.25px #0f5fa9;">Scheduled</span>
<div style="left:1271px;top:588.4px;width:5.6px;height:18.2px;background:#d3dcea;"></div>
<div style="left:1274.6px;top:595px;width:1px;height:5.6px;background:#8893a6;"></div>
<svg style="left:1292.05px;top:590.15px;" width="8.7" height="13.3" viewBox="0 0 8.7 13.3"><path d="M1.03 1.03 L6.65 6.65 L1.03 12.27" fill="none" stroke="#000" stroke-width="2.9" stroke-linejoin="miter"/></svg>
<div style="left:655px;top:614.4px;width:44px;height:6.2px;background:#dedede;"></div>
<svg style="left:672.9px;top:615.5px;" width="8.2" height="4.2" viewBox="0 0 8.2 4.2"><path d="M0 0H8.2 L4.1 4.2 Z" fill="#000"/></svg>
<span id="t135" class="t" style="left:5.6px;top:628.14px;font-size:16.5px;line-height:16.5px;color:#222;transform:scaleX(0.8991);-webkit-text-stroke:0.15px #fff;">Schedule Assistant - 00108</span>
<span id="t136" class="t" style="left:5.4px;top:663.93px;font-size:11px;line-height:11px;color:#2a2a2a;transform:scaleX(0.9397);-webkit-text-stroke:0.22px #fff;">Name</span>
<span id="t137" class="t" style="left:5.4px;top:686.83px;font-size:11px;line-height:11px;color:#2a2a2a;transform:scaleX(0.9233);-webkit-text-stroke:0.22px #fff;">From Date</span>
<span id="t138" class="t" style="left:5.4px;top:709.53px;font-size:11px;line-height:11px;color:#2a2a2a;transform:scaleX(0.9022);-webkit-text-stroke:0.22px #fff;">To Date</span>
<span id="t139" class="t" style="left:5.4px;top:732.23px;font-size:11px;line-height:11px;color:#2a2a2a;transform:scaleX(0.9524);-webkit-text-stroke:0.22px #fff;">Duration</span>
<span id="t140" class="t" style="left:114.3px;top:663.93px;font-size:11px;line-height:11px;color:#1a1ae6;transform:scaleX(0.9613);text-decoration:underline;">00108</span>
<span id="t141" class="t" style="left:114.3px;top:732.23px;font-size:11px;line-height:11px;color:#222;transform:scaleX(0.9693);">2 hrs 30 min</span>
<span id="t142" class="t" style="left:299.3px;top:663.93px;font-size:11px;line-height:11px;color:#2a2a2a;transform:scaleX(0.9373);-webkit-text-stroke:0.22px #fff;">Proposed Duration</span>
<span id="t143" class="t" style="left:299.3px;top:686.83px;font-size:11px;line-height:11px;color:#2a2a2a;transform:scaleX(0.9326);-webkit-text-stroke:0.22px #fff;">Fulfilled Duration</span>
<span id="t144" class="t" style="left:299.3px;top:709.53px;font-size:11px;line-height:11px;color:#2a2a2a;transform:scaleX(0.9358);-webkit-text-stroke:0.22px #fff;">Remaining Duration</span>
<span id="t145" class="t" style="left:299.3px;top:732.23px;font-size:11px;line-height:11px;color:#2a2a2a;transform:scaleX(0.9352);-webkit-text-stroke:0.22px #fff;">Priority</span>
<span id="t146" class="t" style="left:408.2px;top:663.93px;font-size:11px;line-height:11px;color:#222;transform:scaleX(0.9962);">0 min</span>
<span id="t147" class="t" style="left:408.2px;top:686.83px;font-size:11px;line-height:11px;color:#222;transform:scaleX(0.9555);">2 hrs</span>
<span id="t148" class="t" style="left:408.2px;top:709.53px;font-size:11px;line-height:11px;color:#222;transform:scaleX(0.9935);">30 min</span>
<span id="t149" class="t" style="left:593.7px;top:663.93px;font-size:11px;line-height:11px;color:#2a2a2a;transform:scaleX(0.9391);-webkit-text-stroke:0.22px #fff;">Territory</span>
<span id="t150" class="t" style="left:593.7px;top:686.83px;font-size:11px;line-height:11px;color:#2a2a2a;transform:scaleX(0.9169);-webkit-text-stroke:0.22px #fff;">Time From Promised</span>
<span id="t151" class="t" style="left:593.7px;top:709.53px;font-size:11px;line-height:11px;color:#2a2a2a;transform:scaleX(0.9062);-webkit-text-stroke:0.22px #fff;">Time To Promised</span>
<span id="t152" class="t" style="left:593.7px;top:732.23px;font-size:11px;line-height:11px;color:#2a2a2a;transform:scaleX(0.8529);-webkit-text-stroke:0.22px #fff;">Status</span>
<span id="t153" class="t" style="left:702.3px;top:663.93px;font-size:11px;line-height:11px;color:#1a1ae6;transform:scaleX(0.9639);text-decoration:underline;">WA</span>
<span id="t154" class="t" style="left:702.3px;top:732.23px;font-size:11px;line-height:11px;color:#1a1ae6;transform:scaleX(0.9770);text-decoration:underline;">Active</span>
<span id="t155" class="t" style="left:887.6px;top:663.93px;font-size:11px;line-height:11px;color:#2a2a2a;transform:scaleX(0.9212);-webkit-text-stroke:0.22px #fff;">Created On</span>
<span id="t156" class="t" style="left:996px;top:663.93px;font-size:11px;line-height:11px;color:#222;transform:scaleX(1.0098);">02/27/2018</span>
<div style="left:1255px;top:621px;width:92px;height:28.8px;background:#e6e6e6;"></div>
<span id="t157" class="t" style="left:1267.3px;top:630.83px;font-size:11px;line-height:11px;color:#222;transform:scaleX(0.8975);">Exit Search</span>
<svg style="left:1327.8px;top:631px;" width="10.8" height="10.8" viewBox="0 0 10.8 10.8"><path d="M1.500 1.500L9.300 9.300M9.300 1.500L1.500 9.300" stroke="#000" stroke-width="3.300" stroke-linecap="butt"/></svg>
<svg style="left:1203.9px;top:655.8px;" width="93.2" height="93.2" viewBox="0 0 93.2 93.2"><g transform="translate(46.6 46.6) rotate(-90)"><circle r="36.4" fill="none" stroke="#dedede" stroke-width="18.4"/><circle r="36.4" fill="none" stroke="#0c5ea8" stroke-width="18.4" stroke-dasharray="182.97 228.71"/><path d="M26.2 0H46.6" stroke="#fff" stroke-width="1.400"/><path d="M26.2 0H46.6" stroke="#fff" stroke-width="1.400" transform="rotate(288)"/></g></svg>
<span id="t158" class="t" style="left:1232.4px;top:698.03px;font-size:11px;line-height:11px;color:#6c6c6c;transform:scaleX(0.9702);-webkit-text-stroke:0.35px #fff;">2 / 2.50</span>
</body></html>
